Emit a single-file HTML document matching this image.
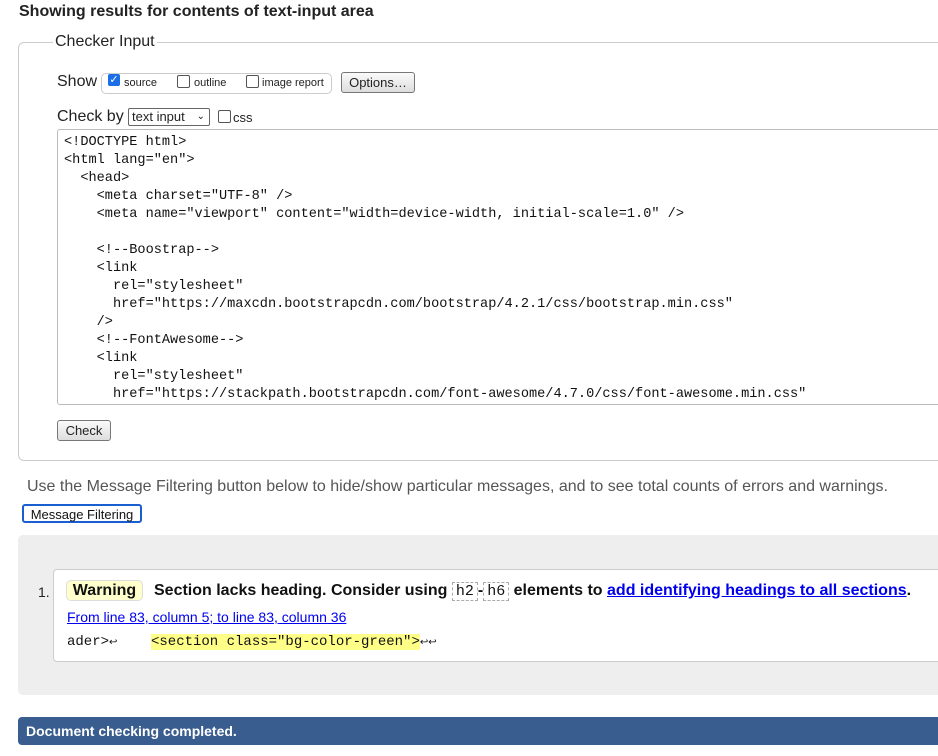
<!DOCTYPE html>
<html><head><meta charset="utf-8"><style>
body{margin:0;width:938px;height:756px;overflow:hidden;background:#fff;font-family:"Liberation Sans",Arial,sans-serif;color:#222;position:relative}
.a{position:absolute;white-space:nowrap}
.mono{font-family:"Liberation Mono",monospace}
.cb{display:inline-block;width:11px;height:11px;border:1px solid #555;border-radius:2px;background:#fff;vertical-align:-1px}
.btn{position:absolute;border:1px solid #777;border-radius:3px;background:linear-gradient(#fafafa,#ddd);font-size:13px;text-align:center;box-sizing:border-box}
</style></head><body>
<div class="a" style="left:19px;top:3px;font-size:16px;font-weight:bold">Showing results for contents of text-input area</div>
<div class="a" style="left:18px;top:42px;width:940px;height:419px;border:1px solid #ccc;border-radius:6px;box-sizing:border-box"></div>
<div class="a" style="left:53px;top:33px;font-size:16px;background:#fff;padding:0 2px">Checker Input</div>
<div class="a" style="left:57px;top:73px;font-size:16px">Show</div>
<div class="a" style="left:101px;top:73px;width:229px;height:19px;border:1px solid #ccc;border-radius:5px"></div>
<div class="a" style="left:108px;top:74px;width:12px;height:12px;background:#1a6ee6;border-radius:2px;color:#fff;font-size:11px;line-height:12px;text-align:center">✓</div>
<div class="a" style="left:124px;top:77px;font-size:11px">source</div>
<div class="a" style="left:177px;top:74px"><span class="cb"></span></div>
<div class="a" style="left:194px;top:77px;font-size:11px">outline</div>
<div class="a" style="left:246px;top:74px"><span class="cb"></span></div>
<div class="a" style="left:262px;top:77px;font-size:11px">image report</div>
<div class="btn" style="left:341px;top:72px;width:74px;height:21px;line-height:19px">Options…</div>
<div class="a" style="left:57px;top:108px;font-size:16px">Check by</div>
<div class="a" style="left:128px;top:108px;width:82px;height:18px;border:1px solid #666;border-radius:2px;box-sizing:border-box;font-size:13px;line-height:16px;padding-left:3px">text input <span style="position:absolute;right:4px;font-size:10px">⌄</span></div>
<div class="a" style="left:218px;top:109px"><span class="cb"></span></div>
<div class="a" style="left:233px;top:110px;font-size:13px">css</div>
<div class="a mono" style="left:57px;top:129px;width:900px;height:276px;border:1px solid #bbb;border-radius:3px;box-sizing:border-box;padding:4px 6px;font-size:13.6px;line-height:18px;white-space:pre;overflow:hidden;color:#111">&lt;!DOCTYPE html&gt;
&lt;html lang="en"&gt;
  &lt;head&gt;
    &lt;meta charset="UTF-8" /&gt;
    &lt;meta name="viewport" content="width=device-width, initial-scale=1.0" /&gt;

    &lt;!--Boostrap--&gt;
    &lt;link
      rel="stylesheet"
      href="https://maxcdn.bootstrapcdn.com/bootstrap/4.2.1/css/bootstrap.min.css"
    /&gt;
    &lt;!--FontAwesome--&gt;
    &lt;link
      rel="stylesheet"
      href="https://stackpath.bootstrapcdn.com/font-awesome/4.7.0/css/font-awesome.min.css"</div>
<div class="btn" style="left:57px;top:420px;width:54px;height:21px;line-height:19px">Check</div>
<div class="a" style="left:27px;top:478px;font-size:16px;color:#555">Use the Message Filtering button below to hide/show particular messages, and to see total counts of errors and warnings.</div>
<div class="btn" style="left:22px;top:504px;width:120px;height:19px;line-height:17px;border:2px solid #1a5fd0;background:#fff;color:#111">Message Filtering</div>
<div class="a" style="left:18px;top:535px;width:940px;height:160px;background:#eee;border-radius:5px"></div>
<div class="a" style="left:53px;top:569px;width:900px;height:93px;background:#fff;border:1px solid #ccc;border-radius:4px;box-sizing:border-box"></div>
<div class="a" style="left:38px;top:584px;font-size:14px">1.</div>
<div class="a" style="left:66px;top:580px;width:77px;height:21px;background:#ffc;border:1px solid #ddd;border-radius:5px;box-sizing:border-box;font-size:16px;font-weight:bold;text-align:center;line-height:20px;color:#111">Warning</div>
<div class="a" style="left:154px;top:582px;font-size:16px;font-weight:bold;color:#111">Section lacks heading. Consider using <span class="mono" style="font-weight:normal;border:1px dashed #aaa;padding:0 3px;font-size:15px">h2</span>-<span class="mono" style="font-weight:normal;border:1px dashed #aaa;padding:0 3px;font-size:15px">h6</span> elements to <span style="color:#00e;text-decoration:underline">add identifying headings to all sections</span>.</div>
<div class="a" style="left:67px;top:609px;font-size:14px;color:#00e;text-decoration:underline">From line 83, column 5; to line 83, column 36</div>
<div class="a mono" style="left:67px;top:634px;font-size:14px;color:#111">ader&gt;<span style="font-size:10px">↩</span></div>
<div class="a mono" style="left:151px;top:634px;font-size:14px;color:#111"><span style="background:#ff8">&lt;section class="bg-color-green"&gt;</span><span style="font-size:10px">↩↩</span></div>
<div class="a" style="left:18px;top:717px;width:940px;height:28px;background:#3a5d8f;border-radius:4px"></div>
<div class="a" style="left:26px;top:723px;font-size:14px;font-weight:bold;color:#fff">Document checking completed.</div>
</body></html>
